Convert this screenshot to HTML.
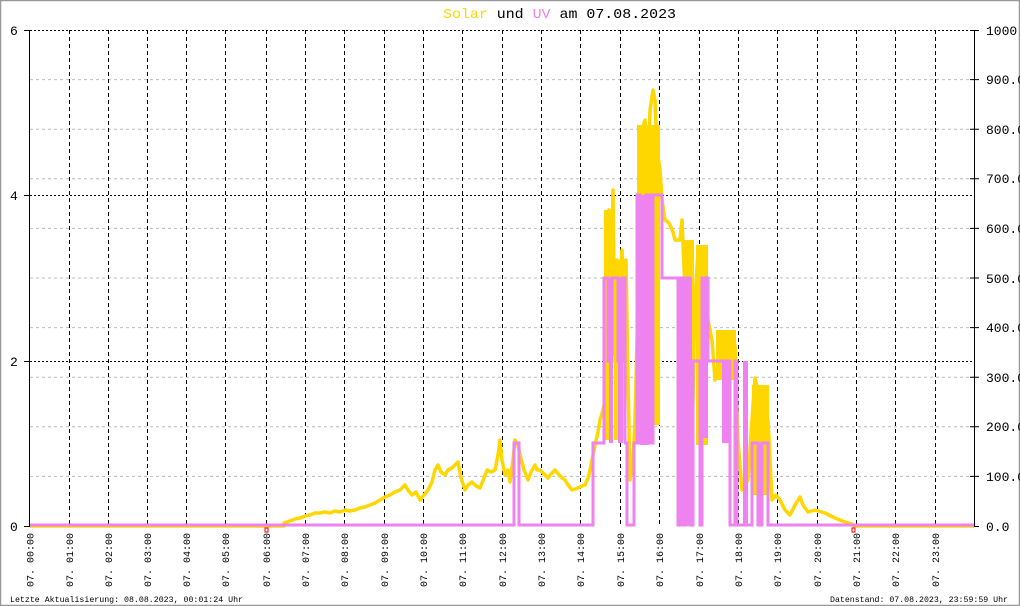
<!DOCTYPE html>
<html><head><meta charset="utf-8"><style>
html,body{margin:0;padding:0;background:#fff}
svg{display:block}
text{font-family:"Liberation Mono","DejaVu Sans Mono",monospace}
</style></head><body>
<svg width="1020" height="606" viewBox="0 0 1020 606" xmlns="http://www.w3.org/2000/svg">
<rect x="0.5" y="0.5" width="1019" height="605" fill="#fff" stroke="#999" stroke-width="1.5"/>
<text x="443" y="18" font-size="14" textLength="233" lengthAdjust="spacingAndGlyphs"><tspan fill="#ffd700">Solar</tspan> und <tspan fill="#ee82ee">UV</tspan> am 07.08.2023</text>
<g stroke="#bbb" stroke-width="1" stroke-dasharray="3,3">
<path d="M30,79.6H974M30,129.2H974M30,178.8H974M30,228.4H974M30,278H974M30,327.6H974M30,377.2H974M30,426.8H974M30,476.4H974"/>
</g>
<g stroke="#000" stroke-width="1" stroke-dasharray="2,2">
<path d="M30,30.5H974M30,195.5H974M30,361.5H974"/>
</g>
<g stroke="#000" stroke-width="1" stroke-dasharray="4,3">
<path d="M69.5,30V526M108.5,30V526M147.5,30V526M186.5,30V526M225.5,30V526M266.5,30V526M305.5,30V526M344.5,30V526M384.5,30V526M423.5,30V526M462.5,30V526M502.5,30V526M541.5,30V526M580.5,30V526M620.5,30V526M659.5,30V526M699.5,30V526M738.5,30V526M777.5,30V526M817.5,30V526M856.5,30V526M895.5,30V526M935.5,30V526"/>
</g>
<path d="M29.5,30V527M974.5,30V527M24,30.5H30M24,195.5H30M24,361.5H30M24,526.5H30" stroke="#000" stroke-width="1"/>
<path d="M970,30.5H979M970,79.6H979M970,129.2H979M970,178.8H979M970,228.4H979M970,278H979M970,327.6H979M970,377.2H979M970,426.8H979M970,476.4H979M970,526.5H979" stroke="#000"/>
<g font-size="13" fill="#000">
<text x="10" y="35">6</text><text x="10" y="200">4</text><text x="10" y="366">2</text><text x="10" y="531">0</text>
<text x="986" y="35">1000</text><text x="986" y="84">900.0</text><text x="986" y="134">800.0</text><text x="986" y="183">700.0</text><text x="986" y="233">600.0</text><text x="986" y="283">500.0</text><text x="986" y="332">400.0</text><text x="986" y="382">300.0</text><text x="986" y="431">200.0</text><text x="986" y="481">100.0</text><text x="986" y="531">0.0</text>
</g>
<!-- dense solar fills -->
<g fill="#ffd700">
<rect x="604" y="210" width="8" height="230"/>
<rect x="614" y="260" width="12" height="180"/>
<rect x="637" y="125" width="23" height="300"/>
<rect x="684" y="240" width="10" height="220"/>
<rect x="696" y="245" width="12" height="200"/>
<rect x="716" y="330" width="20" height="50"/>
<rect x="752" y="385" width="17" height="110"/>
</g>
<polyline fill="none" stroke="#ffd700" stroke-width="3.5" stroke-linejoin="round" points="30,526 284,526 284,523 290,521 295,519 300,518 305,516 310,515 315,513 320,513 325,512 330,513 335,511 340,512 345,510 350,511 355,510 360,508 365,507 370,505 375,503 380,500 385,497 390,495 395,492 400,490 405,485 408,490 412,495 416,492 420,500 424,495 428,490 432,482 435,470 438,465 441,472 445,475 448,470 452,468 455,465 458,462 461,478 465,490 468,485 472,482 476,486 480,488 484,478 487,470 491,472 495,470 498,455 500,440 502,460 505,475 508,470 510,482 513,460 515,440 518,445 520,455 524,470 528,480 531,472 535,465 537,470 540,470 544,474 548,478 551,474 555,470 560,476 565,480 568,485 572,490 575,489 578,488 582,486 585,485 588,478 590,470 593,455 595,445 598,432 600,420 603,410 605,400 607,320 609,210 611,300 613,190 615,355 617,260 620,280 622,250 624,300 626,260 628,380 630,480 633,460 635,420 638,300 640,210 642,130 645,120 648,180 650,110 653,90 655,100 657,150 660,170 662,200 665,220 668,222 670,225 673,232 675,240 680,240 682,220 685,290 688,460 690,350 692,450 695,300 698,250 700,400 702,300 705,270 708,320 712,340 715,380 718,365 722,360 725,350 730,350 735,345 738,440 742,490 748,480 752,420 755,378 758,390 762,440 765,415 768,420 772,500 776,495 780,500 785,510 790,515 795,505 800,497 803,505 808,512 815,510 825,513 835,518 845,522 852,524 854,526 974,526"/>
<!-- UV fills -->
<g fill="#ee82ee">
<rect x="609" y="278" width="4" height="165"/>
<rect x="618" y="278" width="5" height="165"/>
<rect x="640" y="195" width="9" height="250"/>
<rect x="686" y="278" width="6" height="248"/>
<rect x="702" y="278" width="6" height="160"/>
<rect x="722" y="361" width="8" height="82"/>
<rect x="743" y="361" width="5" height="165"/>
<rect x="757" y="443" width="5" height="83"/>
</g>
<path fill="none" stroke="#ee82ee" stroke-width="3" d="M30,525 H514 V443 H519 V525 H593 V443 H604 V278 H608 V361 H612 V278 H618 V361 H622 V278 H625 V443 H627 V525 H634 V443 H637 V195 H640 V443 H643 V361 H646 V195 H650 V443 H653 V195 H662 V278 H678 V525 H680 V278 H683 V525 H686 V278 H690 V525 H693 V361 H700 V525 H702 V278 H708 V361 H730 V525 H735 V361 H737 V525 H752 V443 H758 V525 H762 V443 H768 V525 H974"/>
<rect x="265" y="528" width="3" height="4" fill="none" stroke="#e00" stroke-width="1"/>
<rect x="852" y="528" width="3" height="4" fill="none" stroke="#e00" stroke-width="1"/>
<g font-size="10" fill="#000" text-anchor="end">
<text transform="translate(33.5,533) rotate(-90)">07. 00:00</text>
<text transform="translate(73,533) rotate(-90)">07. 01:00</text>
<text transform="translate(112,533) rotate(-90)">07. 02:00</text>
<text transform="translate(151,533) rotate(-90)">07. 03:00</text>
<text transform="translate(190,533) rotate(-90)">07. 04:00</text>
<text transform="translate(229,533) rotate(-90)">07. 05:00</text>
<text transform="translate(270,533) rotate(-90)">07. 06:00</text>
<text transform="translate(309,533) rotate(-90)">07. 07:00</text>
<text transform="translate(348,533) rotate(-90)">07. 08:00</text>
<text transform="translate(388,533) rotate(-90)">07. 09:00</text>
<text transform="translate(427,533) rotate(-90)">07. 10:00</text>
<text transform="translate(466,533) rotate(-90)">07. 11:00</text>
<text transform="translate(506,533) rotate(-90)">07. 12:00</text>
<text transform="translate(545,533) rotate(-90)">07. 13:00</text>
<text transform="translate(584,533) rotate(-90)">07. 14:00</text>
<text transform="translate(624,533) rotate(-90)">07. 15:00</text>
<text transform="translate(663,533) rotate(-90)">07. 16:00</text>
<text transform="translate(703,533) rotate(-90)">07. 17:00</text>
<text transform="translate(742,533) rotate(-90)">07. 18:00</text>
<text transform="translate(781,533) rotate(-90)">07. 19:00</text>
<text transform="translate(821,533) rotate(-90)">07. 20:00</text>
<text transform="translate(860,533) rotate(-90)">07. 21:00</text>
<text transform="translate(899,533) rotate(-90)">07. 22:00</text>
<text transform="translate(939,533) rotate(-90)">07. 23:00</text>
</g>
<text x="10" y="602" font-size="8.3" textLength="233" lengthAdjust="spacingAndGlyphs">Letzte Aktualisierung: 08.08.2023, 00:01:24 Uhr</text>
<text x="830" y="602" font-size="8.3" textLength="178" lengthAdjust="spacingAndGlyphs">Datenstand: 07.08.2023, 23:59:59 Uhr</text>
</svg>
</body></html>
